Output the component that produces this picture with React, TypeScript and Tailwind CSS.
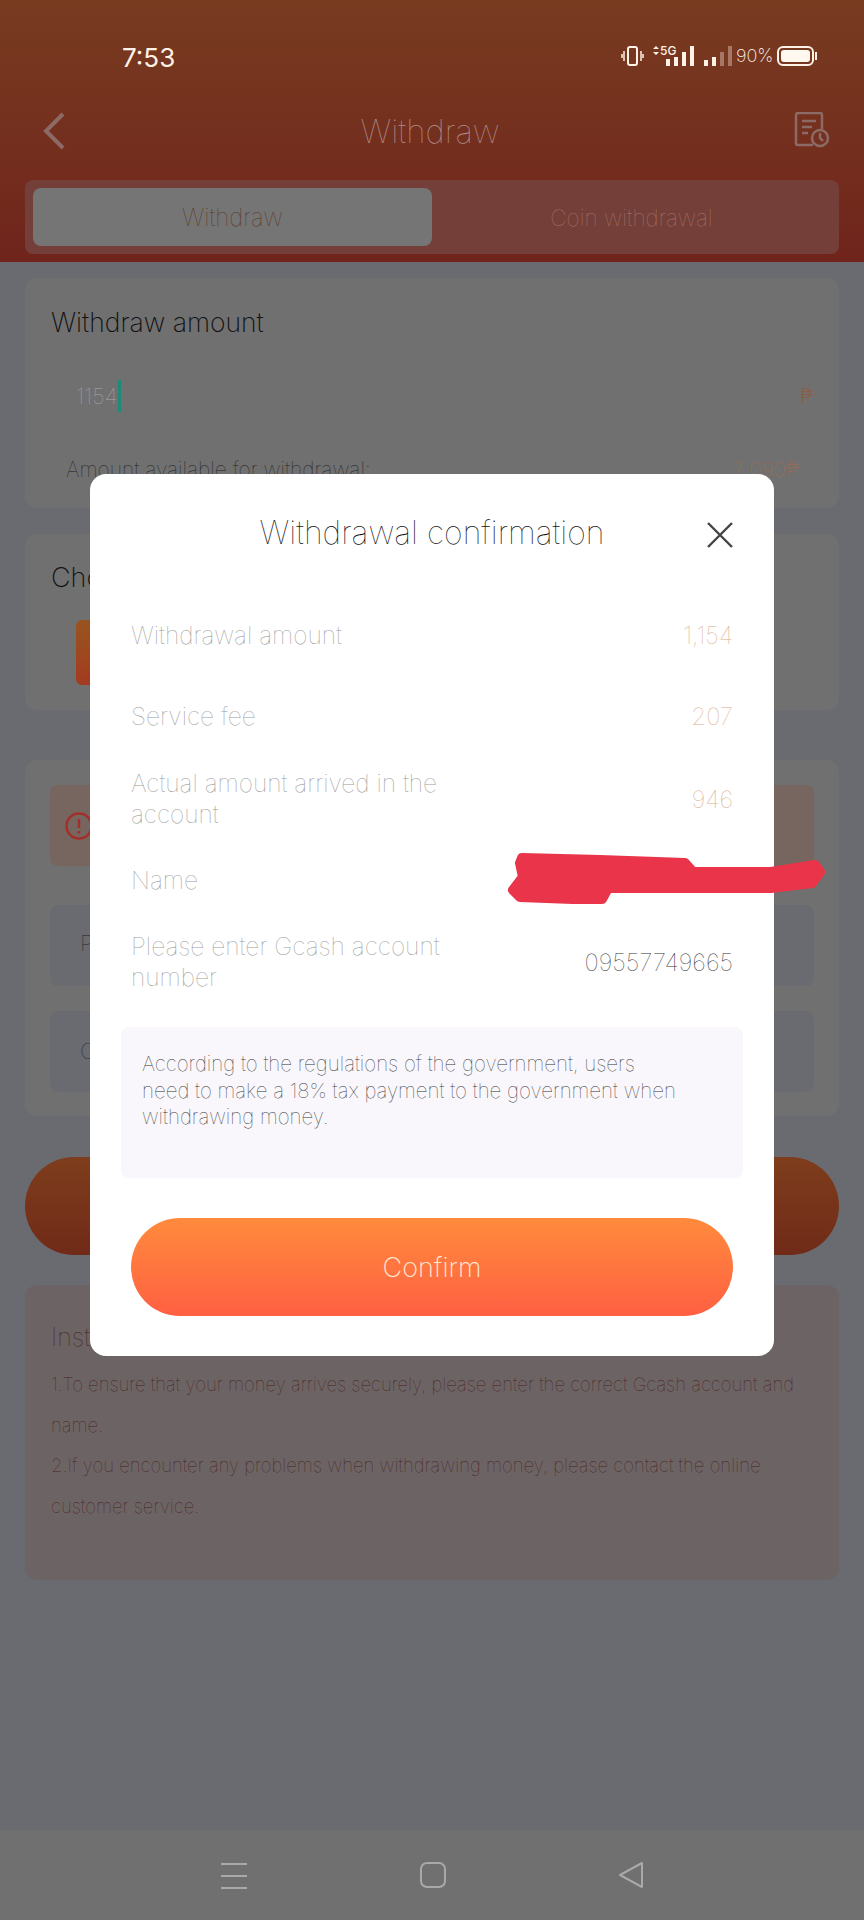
import React from 'react';

const font = { fontFamily: '"Inter", "Liberation Sans", sans-serif' };

function StatusIcons() {
  return (
    <svg width="112" height="24" viewBox="0 0 112 24" className="text-[#fff2e6]">
      <g fill="none" stroke="currentColor" strokeWidth="2">
        <rect x="7" y="3" width="9" height="18" rx="2" />
        <path d="M3 7v10M20 7v10M1 10v4M22 10v4" strokeWidth="1.5" />
      </g>
      <path d="M32 5l3-3 3 3zM32 8l3 3 3-3z" fill="currentColor" />
      <text x="39" y="11" fontSize="12" fontWeight="500" fill="currentColor" style={font}>5G</text>
      <g fill="currentColor">
        <rect x="45" y="15" width="4" height="7" />
        <rect x="53" y="13" width="4" height="9" />
        <rect x="61" y="8" width="4" height="14" />
        <rect x="69" y="2" width="4" height="20" />
        <rect x="83" y="16" width="4" height="6" />
        <rect x="91" y="13" width="4" height="9" />
        <rect x="99" y="8" width="4" height="14" opacity="0.35" />
        <rect x="107" y="2" width="4" height="20" opacity="0.35" />
      </g>
    </svg>
  );
}

function Row({ label, value, valueColor, className }: { label: string; value: string; valueColor: string; className: string }) {
  return (
    <div className={`flex items-center justify-between ${className}`}>
      <div className="w-[310px] text-[24.5px] leading-[31px] font-thin text-[#9a9a9a]">{label}</div>
      <div className={`text-[24px] leading-[31px] font-thin ${valueColor}`}>{value}</div>
    </div>
  );
}

export default function App() {
  return (
    <div className="relative flex h-[1920px] w-[864px] flex-col overflow-hidden bg-[#6a6b70]" style={font}>
      {/* header */}
      <div className="h-[262px] shrink-0 bg-gradient-to-b from-[#783b20] to-[#70241c] px-[25px]">
        <div className="flex h-[112px] items-start justify-between pt-[43px]">
          <span className="ml-[97px] text-[26px] leading-[30px] font-normal text-[#fff2e6]">7:53</span>
          <div className="mr-[22px] flex items-center">
            <StatusIcons />
            <span className="ml-[3px] w-[34px] text-[18px] leading-[26px] font-extralight text-[#fff2e6]">90%</span>
            <div className="ml-[7px] flex h-[20px] w-[37px] items-center rounded-[6px] border-2 border-[#fff2e6] p-[2px]">
              <div className="h-full w-full rounded-[3px] bg-[#fff8ef]" />
            </div>
            <div className="ml-[1px] h-[8px] w-[2px] bg-[#fff2e6]" />
          </div>
        </div>
        <div className="flex h-[68px] items-start justify-between">
          <svg width="24" height="38" viewBox="0 0 24 38" className="ml-[17px]" fill="none" stroke="#8d6a66" strokeWidth="4">
            <path d="M21 2L4 19l17 17" />
          </svg>
          <span className="text-[33px] leading-[38px] font-thin text-[#b08d88]">Withdraw</span>
          <svg width="36" height="36" viewBox="0 0 36 36" className="mr-[9px]" fill="none" stroke="#8d6a66" strokeWidth="2.5">
            <path d="M19 33H4a2 2 0 0 1-2-2V3a2 2 0 0 1 2-2h22a2 2 0 0 1 2 2v14" />
            <path d="M8 9h14M8 15h10M8 21h6" />
            <circle cx="26" cy="26" r="8" />
            <path d="M26 21v5l3 3" />
          </svg>
        </div>
        <div className="flex h-[74px] rounded-lg bg-[#733f38] p-2">
          <div className="flex h-[58px] w-[399px] items-center justify-center rounded-lg bg-[#757575] pt-[2px] text-[24px] font-thin text-[#5c3524]">
            Withdraw
          </div>
          <div className="flex flex-1 items-center justify-center pt-[2px] text-[22.5px] font-thin text-[#a87468]">
            Coin withdrawal
          </div>
        </div>
      </div>

      {/* page behind the dialog */}
      <div className="flex flex-1 flex-col px-[25px] pt-4">
        <div className="h-[230px] rounded-xl bg-[#707070] px-[26px] pt-[27px]">
          <div className="text-[26.5px] leading-[34px] font-extralight text-[#111111]">Withdraw amount</div>
          <div className="mt-[40px] flex h-[34px] items-center justify-between pl-[25px]">
            <div className="flex items-center">
              <span className="text-[22px] font-thin text-[#a8a8a8]">1154</span>
              <span className="h-[32px] w-[3px] bg-[#1d8a7a]" />
            </div>
            <span className="text-[20px] font-extralight text-[#94583a]">₱</span>
          </div>
          <div className="mt-[41px] flex justify-between pl-[15px] pr-[14px] text-[21px] font-thin">
            <span className="text-[#1f1f1f]">Amount available for withdrawal:</span>
            <span className="text-[#a86a4a]">2,090₱</span>
          </div>
        </div>
        <div className="mt-[26px] h-[176px] rounded-xl bg-[#707070] px-[26px] pt-[27px]">
          <div className="text-[27px] leading-[34px] font-extralight text-[#111111]">Choose</div>
          <div className="mt-[25px] ml-[25px] h-[65px] w-[120px] rounded-md bg-gradient-to-b from-[#97541f] to-[#a33a20]" />
        </div>
        <div className="mt-[50px] flex h-[356px] flex-col gap-[25px] rounded-xl bg-[#707070] px-[25px] pt-[25px]">
          <div className="flex h-[81px] items-center rounded-lg bg-[#776560] pl-[15px]">
            <svg width="28" height="28" viewBox="0 0 28 28" fill="none" stroke="#a32f2a" strokeWidth="2.5">
              <circle cx="14" cy="14" r="12.5" />
              <path d="M14 7v9M14 19v2.5" />
            </svg>
          </div>
          <div className="mt-[14px] flex h-[81px] items-center rounded-lg bg-[#6a6b70] pb-[4px] pl-[30px] text-[22px] font-thin text-[#1f1f1f]">P</div>
          <div className="flex h-[81px] items-center rounded-lg bg-[#6a6b70] pl-[30px] text-[22px] font-thin text-[#1f1f1f]">C</div>
        </div>
        <div className="mt-[41px] h-[98px] rounded-full bg-gradient-to-b from-[#7e3d1c] to-[#702a18]" />
        <div className="mt-[30px] h-[295px] rounded-xl bg-[#6c6464] px-[26px] pt-[35px]">
          <div className="text-[25px] leading-[34px] font-thin text-[#3f2018]">Instructions</div>
          <div className="mt-[10px] text-[18.5px] leading-[40.5px] font-thin text-[#4a1f20]">
            <p>1.To ensure that your money arrives securely, please enter the correct Gcash account and name.</p>
            <p>2.If you encounter any problems when withdrawing money, please contact the online customer service.</p>
          </div>
        </div>
      </div>

      {/* nav bar */}
      <div className="flex h-[90px] shrink-0 items-start justify-center bg-[#707070] pt-[31px]">
        <svg width="30" height="30" viewBox="0 0 30 30" fill="none" stroke="#a9a9a9" strokeWidth="2.2">
          <path d="M2 3h26M2 15h26M2 27h26" />
        </svg>
        <svg width="28" height="28" viewBox="0 0 28 28" className="ml-[170px]" fill="none" stroke="#a9a9a9" strokeWidth="2">
          <rect x="2" y="2" width="24" height="24" rx="6" />
        </svg>
        <svg width="28" height="28" viewBox="0 0 28 28" className="ml-[170px]" fill="none" stroke="#a9a9a9" strokeWidth="2" strokeLinejoin="round">
          <path d="M3 14L25 2v24z" />
        </svg>
      </div>

      {/* dialog */}
      <div className="absolute top-[474px] left-[90px] h-[882px] w-[684px] rounded-2xl bg-white px-[41px]">
        <div className="flex h-[117px] items-center justify-center">
          <span className="text-[32px] font-thin text-[#111111]">Withdrawal confirmation</span>
        </div>
        <svg width="30" height="30" viewBox="0 0 30 30" className="absolute top-[46px] right-[39px]" fill="none" stroke="#444444" strokeWidth="2.4">
          <path d="M3 3l24 24M27 3L3 27" />
        </svg>
        <Row label="Withdrawal amount" value="1,154" valueColor="text-[#d9ad8e]" className="mt-[24px] h-[40px]" />
        <Row label="Service fee" value="207" valueColor="text-[#d9ad8e]" className="mt-[41px] h-[40px]" />
        <Row label="Actual amount arrived in the account" value="946" valueColor="text-[#d9ad8e]" className="mt-[32px] h-[62px]" />
        <Row label="Name" value="" valueColor="text-[#666666]" className="mt-[30px] h-[40px]" />
        <Row label="Please enter Gcash account number" value="09557749665" valueColor="text-[#333333]" className="mt-[31px] h-[62px]" />
        <div className="-mx-[10px] mt-[34px] h-[151px] rounded-lg bg-[#f9f7fb] pt-[24px] pr-[61px] pl-[21px] text-[20.5px] leading-[26.5px] font-thin text-[#333333]">
          According to the regulations of the government, users need to make a 18% tax payment to the government when withdrawing money.
        </div>
        <div className="mt-[40px] flex h-[98px] items-center justify-center rounded-full bg-gradient-to-b from-[#ff8a3c] to-[#ff5f42] pt-[2px] text-[27px] font-extralight text-[#ffe6d2]">
          Confirm
        </div>
      </div>

      {/* scribble over the name */}
      <svg width="864" height="70" viewBox="0 845 864 70" className="absolute top-[845px] left-0">
        <path
          d="M522 858L600 860L685 863L693 872L771 872L815 865L820 872L812 883L771 888L608 888L602 899L573 899L520 897L513 890L523 877L520 863Z"
          fill="#e9344a"
          stroke="#e9344a"
          strokeWidth="10"
          strokeLinejoin="round"
        />
      </svg>
    </div>
  );
}
